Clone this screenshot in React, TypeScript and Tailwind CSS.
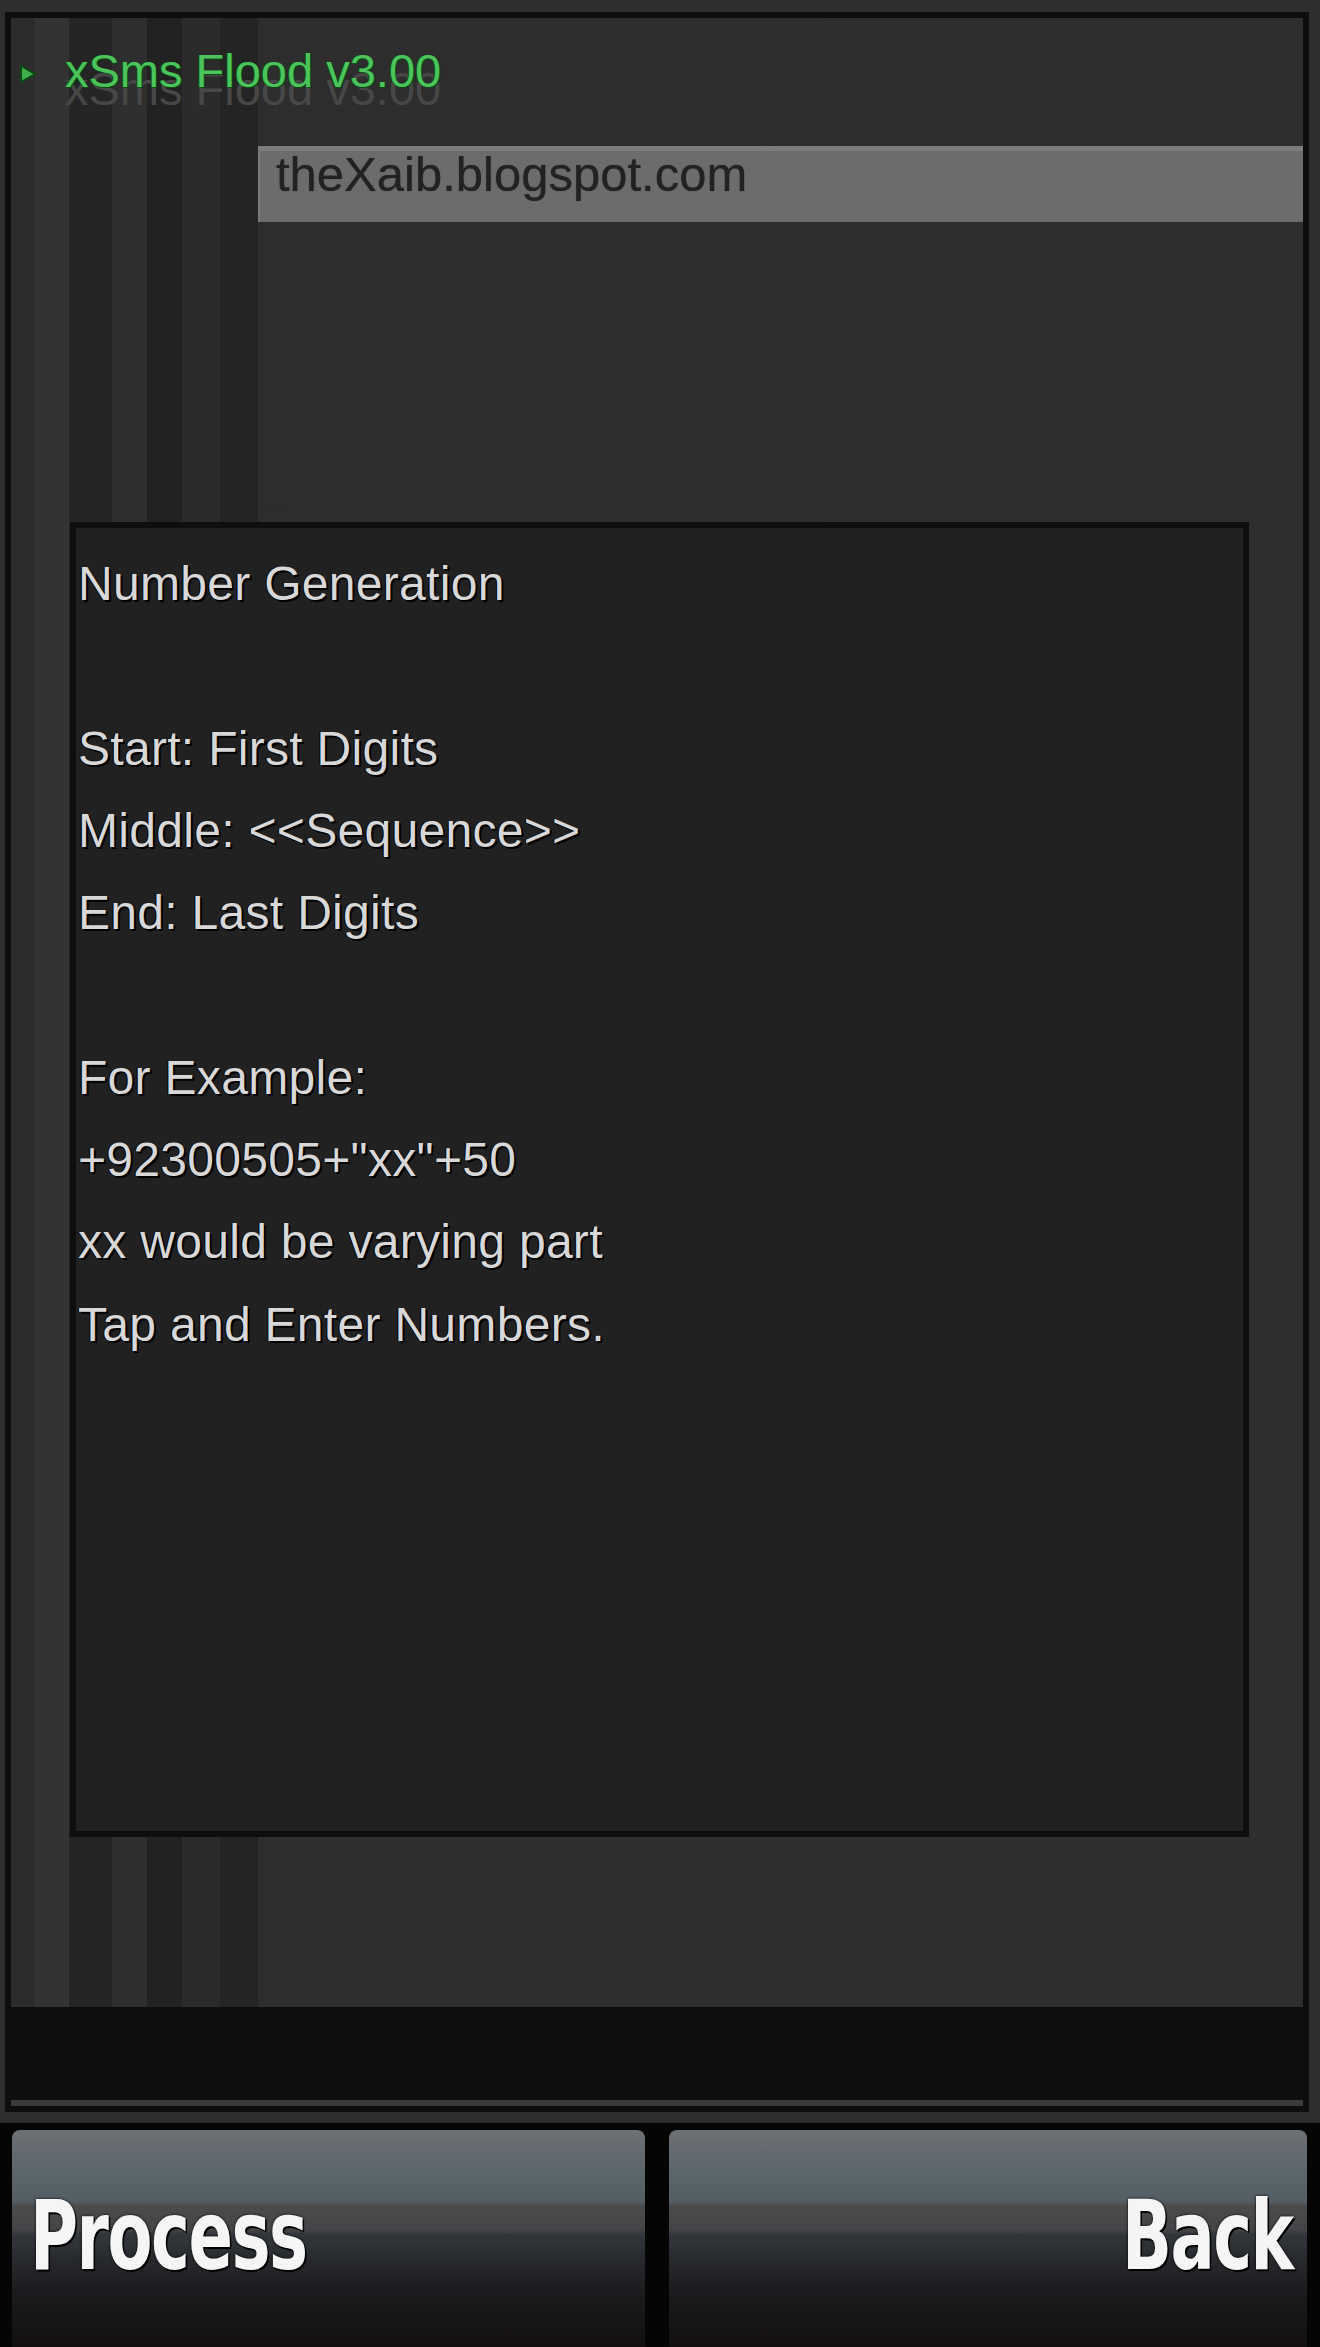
import React from 'react';

const helpLines = [
  'Number Generation',
  '',
  'Start: First Digits',
  'Middle: <<Sequence>>',
  'End: Last Digits',
  '',
  'For Example:',
  '+92300505+"xx"+50',
  'xx would be varying part',
  'Tap and Enter Numbers.',
];

const SoftKey = ({ label, align }: { label: string; align: 'left' | 'right' }) => (
  <div
    className={`h-[217px] rounded-t-[8px] flex items-start pt-[58px] bg-[linear-gradient(to_bottom,#6e7174_0%,#646a6f_10%,#5a656c_20%,#545d64_33%,#4a4b4d_35%,#444547_46%,#33373c_48%,#27292d_60%,#1b1b1e_75%,#130f0f_100%)] ${
      align === 'left' ? 'justify-start pl-[18px]' : 'justify-end pr-[14px]'
    }`}
  >
    <span
      className={`font-['DejaVu_Sans_Condensed','DejaVu_Sans',sans-serif] font-bold text-[96px] leading-none tracking-[-2px] text-[#f5f5f5] scale-x-[0.76] [text-shadow:0_0_3px_#000,2px_2px_0_#000] ${
        align === 'left' ? 'origin-left' : 'origin-right'
      }`}
    >
      {label}
    </span>
  </div>
);

export default function App() {
  return (
    <div className="w-[1320px] h-[2347px] bg-[#2e2e2e] flex flex-col font-['Liberation_Sans',sans-serif] overflow-hidden">
      {/* phone screen frame */}
      <div className="ml-[5px] mr-[11px] mt-[12px] h-[2100px] border-[6px] border-[#0e0e0e] flex flex-col">
        <div className="flex-1 flex flex-col bg-[linear-gradient(to_right,#2c2c2c_0px,#2c2c2c_24px,#333333_24px,#333333_58px,#252525_58px,#252525_101px,#2e2e2e_101px,#2e2e2e_136px,#222222_136px,#222222_171px,#2b2b2b_171px,#2b2b2b_209px,#242424_209px,#242424_247px,#2d2d2d_247px,#2e2e2e_100%)]">
          {/* title */}
          <div className="mt-[26px] h-[54px] flex items-center">
            <svg width="20" height="22" viewBox="0 0 20 22" className="ml-[7px] mt-[6px]">
              <path d="M3 3 L17 11 L3 19 Z" fill="#3fae4c" stroke="#0b4a12" strokeWidth="2" />
            </svg>
            <span className="ml-[27px] text-[47px] leading-[54px] text-[#4cc45b] [text-shadow:1px_1px_0_#0a4a10,-1px_0_0_#0a4a10,0_18px_0_#474747]">
              xSms Flood v3.00
            </span>
          </div>

          {/* url bar */}
          <div className="mt-[48px] ml-[247px] h-[76px] bg-[#6c6c6c] border-t-[5px] border-t-[#7c7c7c] border-l-[2px] border-l-[#7a7a7a] pl-[16px]">
            <span className="block -mt-[5px] text-[49px] leading-[56px] text-[#222222] [text-shadow:0_0_1px_#333]">
              theXaib.blogspot.com
            </span>
          </div>

          {/* help dialog */}
          <div className="mt-[300px] ml-[59px] w-[1179px] h-[1315px] border-[6px] border-[#0e0e0e] bg-[#212121] pt-[15px] pl-[2px]">
            {helpLines.map((line, i) => (
              <div
                key={i}
                className="h-[82.3px] leading-[82px] text-[48px] tracking-[0.3px] text-[#d8d8d8] whitespace-pre [text-shadow:2px_2px_0_#000,-1px_0_0_#000]"
              >
                {line || '\u00a0'}
              </div>
            ))}
          </div>
        </div>

        {/* status strip */}
        <div className="h-[93px] bg-[#0e0e0e]" />
        <div className="h-[6px] bg-[#3a3a3a]" />
      </div>

      <div className="h-[11px] bg-[#2e2e2e]" />

      {/* softkeys */}
      <div className="flex-1 bg-[#050505] pt-[7px] pl-[12px] pr-[13px] grid grid-cols-[633px_638px] gap-[24px]">
        <SoftKey label="Process" align="left" />
        <SoftKey label="Back" align="right" />
      </div>
    </div>
  );
}
